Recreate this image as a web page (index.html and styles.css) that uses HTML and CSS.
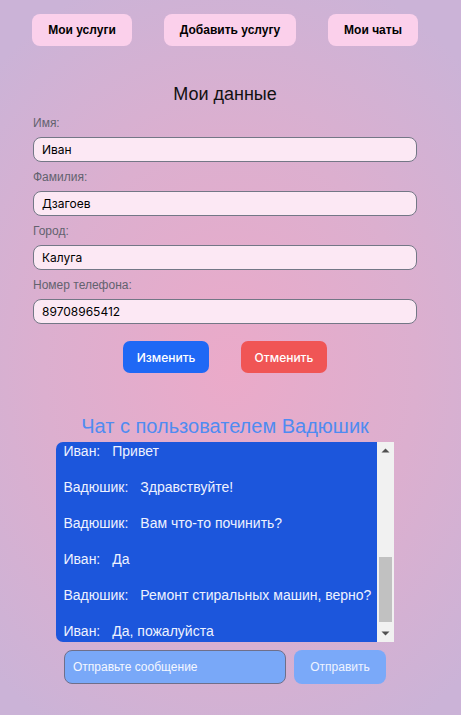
FILE: index.html
```html
<!DOCTYPE html>
<html lang="ru">
<head>
<meta charset="utf-8">
<title>Мои данные</title>
<link rel="stylesheet" href="styles.css">
</head>
<body>
<div class="page">
  <nav class="nav">
    <button class="nav-btn">Мои услуги</button>
    <button class="nav-btn">Добавить услугу</button>
    <button class="nav-btn">Мои чаты</button>
  </nav>

  <section class="profile">
    <h2 class="profile-title">Мои данные</h2>
    <form class="form">
      <label class="label">Имя:</label>
      <input class="field" type="text" value="Иван">
      <label class="label">Фамилия:</label>
      <input class="field" type="text" value="Дзагоев">
      <label class="label">Город:</label>
      <input class="field" type="text" value="Калуга">
      <label class="label">Номер телефона:</label>
      <input class="field" type="text" value="89708965412">
    </form>
    <div class="actions">
      <button class="act act-edit">Изменить</button>
      <button class="act act-cancel">Отменить</button>
    </div>
  </section>

  <section class="chat">
    <h2 class="chat-title">Чат с пользователем Вадюшик</h2>
    <div class="chat-box">
      <div class="messages">
        <p class="msg"><span class="who">Иван:</span>Привет</p>
        <p class="msg"><span class="who">Вадюшик:</span>Здравствуйте!</p>
        <p class="msg"><span class="who">Вадюшик:</span>Вам что-то починить?</p>
        <p class="msg"><span class="who">Иван:</span>Да</p>
        <p class="msg"><span class="who">Вадюшик:</span>Ремонт стиральных машин, верно?</p>
        <p class="msg"><span class="who">Иван:</span>Да, пожалуйста</p>
      </div>
      <div class="scrollbar">
        <div class="sb-btn">
          <svg width="9" height="5" viewBox="0 0 9 5"><polygon points="0.5,4.5 4.5,0.5 8.5,4.5" fill="#505050"/></svg>
        </div>
        <div class="sb-track"><div class="sb-thumb" style="margin-top:98px;height:65px"></div></div>
        <div class="sb-btn">
          <svg width="9" height="5" viewBox="0 0 9 5"><polygon points="0.5,0.5 8.5,0.5 4.5,4.5" fill="#505050"/></svg>
        </div>
      </div>
    </div>
    <div class="send-row">
      <input class="send-input" type="text" placeholder="Отправьте сообщение">
      <button class="send-btn">Отправить</button>
    </div>
  </section>
</div>
</body>
</html>
```

FILE: styles.css
```css
* { box-sizing: border-box; }

html, body {
  margin: 0;
  padding: 0;
}

body {
  min-height: 715px;
  font-family: "Liberation Sans", Arial, sans-serif;
  background: radial-gradient(ellipse 340px 420px at 230px 370px, #ebaac9 0%, #dcafcf 55%, #cbb3d7 100%);
  background-color: #cbb2d7;
}

.page {
  width: 386px;
  margin-left: 32px;
  display: flex;
  flex-direction: column;
}

.nav {
  display: flex;
  justify-content: space-between;
  padding-top: 14px;
}

.nav-btn {
  height: 32px;
  padding: 0;
  border: none;
  border-radius: 8px;
  background: #fbd0eb;
  color: #000;
  font-family: "Liberation Sans", Arial, sans-serif;
  font-weight: bold;
  font-size: 12px;
  white-space: nowrap;
}
.nav-btn:nth-child(1) { width: 100px; }
.nav-btn:nth-child(2) { width: 132px; }
.nav-btn:nth-child(3) { width: 90px; }

.profile {
  display: flex;
  flex-direction: column;
  padding: 0 1px;
}

.profile-title {
  margin: 38px 0 0;
  text-align: center;
  font-weight: normal;
  font-size: 18px;
  line-height: 21px;
  color: #111;
  font-family: "Liberation Sans", Arial, sans-serif;
}

.form {
  display: flex;
  flex-direction: column;
  margin-top: 11px;
}

.label {
  font-size: 12px;
  line-height: 14px;
  color: #62626e;
  margin-bottom: 7px;
}

.field {
  height: 25px;
  margin: 0 0 8px;
  padding: 0 8px;
  border: 1px solid #737786;
  border-radius: 8px;
  background: #fce8f4;
  color: #000;
  font-family: Inter, "Liberation Sans", sans-serif;
  font-size: 12px;
}

.actions {
  display: flex;
  justify-content: center;
  gap: 32px;
  margin-top: 9px;
}

.act {
  width: 86px;
  height: 32px;
  border: none;
  border-radius: 7px;
  color: #fff;
  font-family: Inter, "Liberation Sans", sans-serif;
  font-weight: 500;
  font-size: 12px;
}
.act-edit { background: #1f68f5; }
.act-cancel { background: #f05555; }

.chat {
  display: flex;
  flex-direction: column;
  align-items: center;
}

.chat-title {
  margin: 42px 0 4px;
  font-weight: normal;
  font-size: 20px;
  line-height: 23px;
  color: #4f8bf1;
  font-family: "Liberation Sans", Arial, sans-serif;
}

.chat-box {
  width: 338px;
  height: 200px;
  display: flex;
  margin-left: -1px;
}

.messages {
  flex: 1;
  background: #1c56dc;
  border-radius: 7px 0 0 7px;
  overflow: hidden;
  padding: 1px 8px 0;
  display: flex;
  flex-direction: column;
  gap: 20px;
}

.msg {
  margin: 0;
  color: #eef2ff;
  font-size: 14px;
  line-height: 16px;
  white-space: nowrap;
}

.who { margin-right: 12px; }

.scrollbar {
  width: 17px;
  background: #f1f1f1;
  display: flex;
  flex-direction: column;
}

.sb-btn {
  height: 17px;
  display: flex;
  align-items: center;
  justify-content: center;
}
.sb-btn svg { display: block; }

.sb-track {
  flex: 1;
  padding: 0 2px;
}

.sb-thumb {
  background: #c1c1c1;
}

.send-row {
  display: flex;
  gap: 8px;
  margin-top: 8px;
}

.send-input {
  width: 222px;
  height: 34px;
  padding: 0 8px;
  border: 1px solid #6f6f8a;
  border-radius: 8px;
  background: #79a8f8;
  color: #fff;
  font-family: "Liberation Sans", Arial, sans-serif;
  font-size: 12px;
}
.send-input::placeholder { color: #f4f7ff; }

.send-btn {
  width: 92px;
  height: 34px;
  border: none;
  border-radius: 8px;
  background: #7aa9f9;
  color: #eef3ff;
  font-family: "Liberation Sans", Arial, sans-serif;
  font-size: 12px;
}
```
